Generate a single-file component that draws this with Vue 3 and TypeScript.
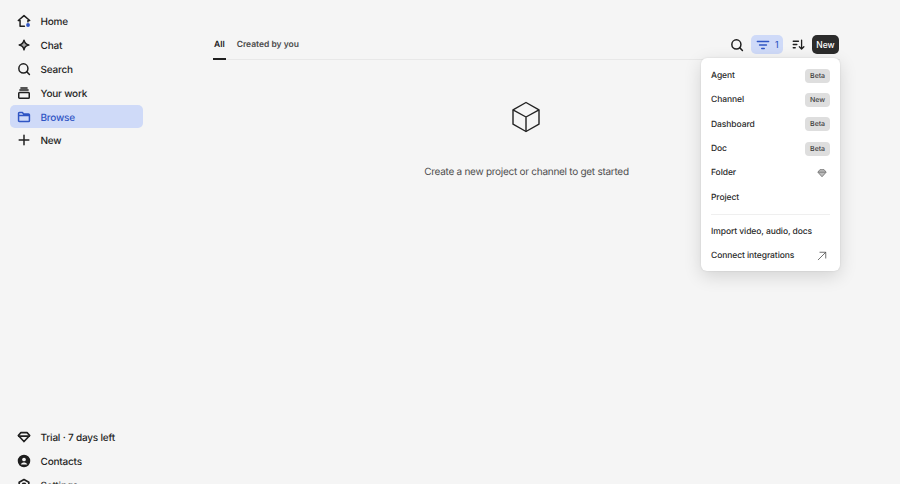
<script setup lang="ts">
interface MenuItem { label: string; badge?: string; icon?: 'gem' | 'arrow' }
const topNav = [
  { label: 'Home', icon: 'home' },
  { label: 'Chat', icon: 'chat' },
  { label: 'Search', icon: 'search' },
  { label: 'Your work', icon: 'work' },
  { label: 'Browse', icon: 'browse', active: true },
  { label: 'New', icon: 'plus' },
]
const bottomNav = [
  { label: 'Trial · 7 days left', icon: 'gem' },
  { label: 'Contacts', icon: 'contact' },
  { label: 'Settings', icon: 'settings' },
]
const menuTop: MenuItem[] = [
  { label: 'Agent', badge: 'Beta' },
  { label: 'Channel', badge: 'New' },
  { label: 'Dashboard', badge: 'Beta' },
  { label: 'Doc', badge: 'Beta' },
  { label: 'Folder', icon: 'gem' },
  { label: 'Project' },
]
const menuBottom: MenuItem[] = [
  { label: 'Import video, audio, docs' },
  { label: 'Connect integrations', icon: 'arrow' },
]
</script>

<template>
  <div class="app">
    <aside class="side">
      <nav class="group">
        <a v-for="n in topNav" :key="n.label" class="nav" :class="{ active: n.active }">
          <span class="ico">
            <svg viewBox="0 0 16 16" width="14" height="14" fill="none" stroke="currentColor" stroke-width="1.700" stroke-linejoin="round" stroke-linecap="round">
              <template v-if="n.icon === 'home'">
                <path d="M8.500 14H3.500V7.500H1.500L8 1.800l6.500 5.700H12.500v1.500" />
                <circle cx="12.600" cy="12.600" r="2.200" fill="#2f55c4" stroke="none" />
              </template>
              <path v-else-if="n.icon === 'chat'" d="M8 2.500c.6 3.100 2 4.900 5.500 5.500-3.500.6-4.900 2.400-5.500 5.500-.6-3.100-2-4.900-5.500-5.500 3.500-.6 4.900-2.400 5.500-5.500z" fill="currentColor" fill-opacity="0.35" />
              <template v-else-if="n.icon === 'search'">
                <circle cx="7.300" cy="7.300" r="5.200" />
                <path d="M11 11l3.200 3.200" />
              </template>
              <template v-else-if="n.icon === 'work'">
                <rect x="2" y="7.300" width="12" height="6.700" rx="1" />
                <path d="M3.300 4.700h9.400M4.500 2.200h7" />
              </template>
              <path v-else-if="n.icon === 'browse'" d="M1.800 3.800c0-.6.400-1 1-1h3.400l1.300 1.700h5.700c.6 0 1 .4 1 1v6.700c0 .6-.4 1-1 1H2.800c-.6 0-1-.4-1-1zM1.800 6.200h12.400" />
              <path v-else d="M8 2.500v11M2.500 8h11" />
            </svg>
          </span>
          <span class="lbl">{{ n.label }}</span>
        </a>
      </nav>
      <nav class="group">
        <a v-for="n in bottomNav" :key="n.label" class="nav">
          <span class="ico">
            <svg viewBox="0 0 16 16" width="14" height="14" fill="none" stroke="currentColor" stroke-width="1.900" stroke-linejoin="round" stroke-linecap="round">
              <template v-if="n.icon === 'gem'">
                <path d="M4.500 3h7L14.500 6.300 8 13.200 1.500 6.300z" />
                <path d="M2 7h12" />
              </template>
              <template v-else-if="n.icon === 'contact'">
                <circle cx="8" cy="8" r="6.200" fill="currentColor" />
                <circle cx="8" cy="6.300" r="2.100" fill="#f5f5f5" stroke="none" />
                <path d="M4.300 12c.8-1.600 2.200-2.200 3.700-2.200s2.900.6 3.700 2.200z" fill="#f5f5f5" stroke="none" />
              </template>
              <template v-else>
                <path d="M8 1.800l5.500 3.100v6.200L8 14.200l-5.500-3.100V4.900z" />
                <circle cx="8" cy="8" r="1.800" />
              </template>
            </svg>
          </span>
          <span class="lbl">{{ n.label }}</span>
        </a>
      </nav>
    </aside>

    <main class="main">
      <header class="bar">
        <div class="tabs">
          <span class="tab on">All</span>
          <span class="tab">Created by you</span>
        </div>
        <div class="tools">
          <button class="tool">
            <svg viewBox="0 0 16 16" width="14" height="14" fill="none" stroke="#1f1f1f" stroke-width="1.700" stroke-linecap="round">
              <circle cx="7.300" cy="7.300" r="5.200" /><path d="M11 11l3.200 3.200" />
            </svg>
          </button>
          <button class="filter">
            <svg viewBox="0 0 16 16" width="14" height="14" fill="none" stroke="currentColor" stroke-width="1.500" stroke-linecap="round">
              <path d="M1.500 4h13M4 8h8M6.500 12h3" />
            </svg>
            <span>1</span>
          </button>
          <button class="tool">
            <svg viewBox="0 0 16 16" width="13" height="13" fill="none" stroke="#1f1f1f" stroke-width="1.600" stroke-linecap="round" stroke-linejoin="round">
              <path d="M1.500 4h6.500M1.500 8h4.500M1.500 12h2.500M11.800 2.500v11M9 10.700l2.800 2.800 2.800-2.800" />
            </svg>
          </button>
          <button class="new">New</button>
        </div>
        <div class="menu">
          <div v-for="m in menuTop" :key="m.label" class="mi">
            <span class="mlbl">{{ m.label }}</span>
            <span v-if="m.badge" class="badge">{{ m.badge }}</span>
            <svg v-else-if="m.icon === 'gem'" class="mico" viewBox="0 0 12 12" width="10" height="10" fill="#bdbdbd" stroke="#6f6f6f" stroke-width="1" stroke-linejoin="round">
              <path d="M3.500 2h5L11 5 6 10.500 1 5z" /><path d="M1.500 5h9" fill="none" />
            </svg>
          </div>
          <div class="sep"></div>
          <div v-for="m in menuBottom" :key="m.label" class="mi">
            <span class="mlbl">{{ m.label }}</span>
            <svg v-if="m.icon === 'arrow'" class="mico" viewBox="0 0 12 12" width="10" height="10" fill="none" stroke="#555" stroke-width="1" stroke-linecap="round" stroke-linejoin="round">
              <path d="M1.500 10.500L10.500 1.500M3.500 1.500h7v7" />
            </svg>
          </div>
        </div>
      </header>
      <section class="empty">
        <svg class="cube" viewBox="0 0 30 32" width="30" height="32" fill="none" stroke="#222" stroke-width="1.400" stroke-linejoin="round">
          <path d="M15 1.500L28 8.800v14.400L15 30.500 2 23.200V8.800z" />
          <path d="M2 8.800l13 7.200 13-7.200M15 16v14.500" />
        </svg>
        <p>Create a new project or channel to get started</p>
      </section>
    </main>
  </div>
</template>

<style>
html, body { margin: 0; height: 484px; overflow: hidden; background: #f5f5f5; }
</style>

<style scoped>
.app {
  display: flex;
  height: 484px;
  overflow: hidden;
  background: #f5f5f5;
  font-family: Inter, "Liberation Sans", sans-serif;
  color: #1f1f1f;
  text-rendering: geometricPrecision;
}
.side {
  width: 133px;
  flex: none;
  margin-left: 10px;
  padding-top: 9px;
  height: 497px;
  box-sizing: border-box;
  display: flex;
  flex-direction: column;
  justify-content: space-between;
}
.group { display: flex; flex-direction: column; }
.nav {
  display: flex;
  align-items: center;
  height: 23.900px;
  border-radius: 5px;
  font-size: 10px;
  font-weight: 450;
  letter-spacing: -0.2px;
  color: #1f1f1f;
}
.lbl { padding-top: 2px; }
.nav.active { background: #cfdaf8; color: #2f55c4; }
.ico { width: 30.500px; padding-left: 7px; box-sizing: border-box; display: flex; flex: none; }
.main { flex: 1; min-width: 0; padding: 0 60px 0 70px; }
.bar {
  position: relative;
  height: 59px;
  display: flex;
  justify-content: space-between;
  border-bottom: 1px solid #e8e8e8;
}
.tabs { display: flex; gap: 10px; }
.tab {
  font-size: 8.500px;
  font-weight: 600;
  color: #4a4a4a;
  padding: 40px 1px 0;
  height: 20px;
  box-sizing: border-box;
  line-height: 11px;
}
.tab.on { color: #1a1a1a; border-bottom: 2px solid #1f1f1f; height: 60px; }
.tools { display: flex; align-items: center; height: 19px; margin-top: 35px; margin-right: 1px; }
button { border: 0; background: none; padding: 0; font: inherit; display: flex; align-items: center; }
.tool { width: 16px; justify-content: center; }
.filter {
  margin: 0 7px 0 6px;
  width: 32px;
  height: 19px;
  border-radius: 5px;
  background: #cfdaf8;
  color: #2f55c4;
  font-size: 8.500px;
  font-weight: 500;
  gap: 5px;
  padding-left: 5px;
  box-sizing: border-box;
}
.new {
  margin-left: 6px;
  height: 19px;
  width: 27px;
  justify-content: center;
  border-radius: 5px;
  background: #2b2b2b;
  color: #fff;
  font-size: 8.500px;
  font-weight: 500;
}
.menu {
  position: absolute;
  right: 0;
  top: 58px;
  width: 139px;
  height: 213px;
  box-sizing: border-box;
  padding: 5.500px 0;
  background: #fff;
  border-radius: 6px;
  box-shadow: 0 5px 18px rgba(0, 0, 0, 0.14), 0 0 2px rgba(0, 0, 0, 0.12);
  z-index: 2;
}
.mi {
  display: flex;
  align-items: center;
  justify-content: space-between;
  height: 24.300px;
  padding: 0 10px;
  font-size: 8.500px;
  font-weight: 500;
  letter-spacing: -0.08px;
  color: #2a2a2a;
}
.mlbl { padding-top: 1px; }
.badge {
  background: #dedede;
  border-radius: 4px;
  font-size: 7px;
  color: #3a3a3a;
  height: 14px;
  line-height: 14px;
  width: 25px;
  text-align: center;
}
.mico { margin-right: 3px; }
.sep { height: 1px; background: #efefef; margin: 5px 10px 4px; }
.empty { display: flex; flex-direction: column; align-items: center; padding-top: 41px; }
.cube { margin-right: 1px; }
.empty p {
  margin: 31px 0 0;
  font-size: 10px;
  font-weight: 400;
  letter-spacing: -0.27px;
  line-height: 16px;
  color: #4f4f4f;
}
</style>
